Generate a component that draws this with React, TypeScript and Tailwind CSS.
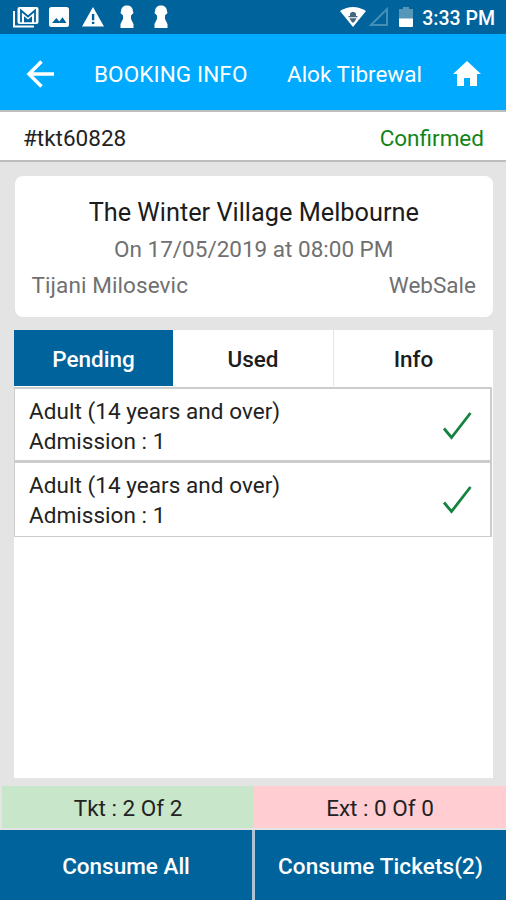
import React from "react";

function TicketRow({ className }: { className: string }) {
  return (
    <div className={`flex items-center justify-between border-[#cccccc] pl-[14px] pr-[17px] ${className}`}>
      <div className="text-[22.5px] leading-[30px] tracking-[0.05px] text-[#222]">
        <div>Adult (14 years and over)</div>
        <div>Admission : 1</div>
      </div>
      <svg className="h-[30px] w-[32px]" viewBox="0 0 32 30" fill="none" stroke="#14833f" strokeWidth="2.8">
        <path d="M3 17.5 10.5 26.5 29.5 2" />
      </svg>
    </div>
  );
}

function Keyhole() {
  return (
    <svg className="h-6 w-4" viewBox="0 0 16 24" fill="white">
      <path d="M8 0.5C4.6 0.5 2.2 2.6 2.2 5.5L1.5 8L4 10.500V14L1.500 19V23H14.500V19L12 14V10.500L14.500 8L13.800 5.500C13.800 2.600 11.400 0.500 8 0.500Z" />
    </svg>
  );
}

export default function App() {
  return (
    <div className="flex h-[900px] w-[506px] flex-col overflow-hidden bg-[#e4e4e4] font-[Roboto,sans-serif] text-[22.5px]">
      <header className="flex h-[34px] shrink-0 items-center bg-[#00639b] pl-[12px] pr-[11px] text-white">
        <svg className="h-6 w-7" viewBox="0 0 28 24" fill="none" stroke="white">
          <path d="M2 6v15.5h20" strokeWidth="2" />
          <rect x="5.500" y="2" width="21" height="17" rx="2" fill="white" stroke="none" />
          <path d="M9 17.200V5.500l7 6 7-6v11.700" strokeWidth="1.800" stroke="#00639b" />
          <path d="M12 17.200v-6l4 3.300 4-3.300v6Z" fill="#00639b" stroke="none" />
        </svg>
        <svg className="ml-[9px] h-5 w-5" viewBox="0 0 20 20">
          <rect width="20" height="20" rx="2.5" fill="white" />
          <path d="m3 16 4.3-5 3 3.4 3.2-4.2L17.5 16Z" fill="#00639b" />
        </svg>
        <svg className="ml-[13px] h-5 w-[22px]" viewBox="0 0 22 20">
          <path d="m11 0 11 19.5H0Z" fill="white" />
          <path d="M9.9 7h2.4v6.2H9.9Zm0 7.7h2.4V17H9.9Z" fill="#00639b" />
        </svg>
        <div className="ml-[15px] flex gap-[18px]"><Keyhole /><Keyhole /></div>
        <svg className="ml-auto h-[21px] w-[26px]" viewBox="0 0 26 21">
          <path d="M0 4Q13-4 26 4L13 20Z" fill="white" />
          <path d="M10 9V6.5Q13 3 16 6.5V9h1.5v1.3h-9V9ZM9.5 11.3h7L15 14l-2 2-2-2Z" fill="#45677e" />
        </svg>
        <svg className="ml-[3px] h-5 w-5" viewBox="0 0 20 20" fill="none" stroke="#438fb6" strokeWidth="2">
          <path d="M18 2v16H2Z" />
        </svg>
        <svg className="ml-[10px] h-[20px] w-[14px]" viewBox="0 0 14 20">
          <path d="M4 0h6v2h4v10H0V2h4Z" fill="#5596b9" />
          <path d="M0 11.5h14V19q0 1-1 1H1q-1 0-1-1Z" fill="white" />
        </svg>
        <span className="ml-[9px] pt-[3px] text-[19.5px] font-medium leading-none">3:33 PM</span>
      </header>

      <nav className="flex h-[76px] shrink-0 items-center bg-[#00aaff] pl-[26px] pr-[25px] pt-[4px] text-white">
        <svg className="h-7 w-[29px]" viewBox="0 0 29 28" fill="none" stroke="white" strokeWidth="3.5">
          <path d="M28 14H3M15.5 1.5 3 14l12.5 12.5" />
        </svg>
        <span className="ml-[39px] pt-[2px] tracking-[0.1px]">BOOKING INFO</span>
        <span className="ml-auto mr-[31px] pt-[2px]">Alok Tibrewal</span>
        <svg className="mb-[2px] h-[25px] w-7" viewBox="0 0 28 25" fill="white">
          <path d="M14 0 0 13h4v12h7v-8h6v8h7V13h4Z" />
        </svg>
      </nav>

      <section className="flex h-[52px] shrink-0 items-center justify-between border-y-2 border-[#bdbdbd] bg-white pl-[23px] pr-[22px] pt-[6px]">
        <span className="text-[#222]">#tkt60828</span>
        <span className="text-[#128416]">Confirmed</span>
      </section>

      <section className="ml-[14.5px] mr-[13px] mt-[14px] h-[141px] shrink-0 rounded-lg bg-white px-[17px] pt-[18px] text-[#707070]">
        <h1 className="pt-px text-center text-[25.3px] leading-[35px] text-[#1c1c1c]">The Winter Village Melbourne</h1>
        <p className="text-center leading-[38px]">On 17/05/2019 at 08:00 PM</p>
        <div className="flex justify-between leading-[34px]"><span className="tracking-[0.1px]">Tijani Milosevic</span><span>WebSale</span></div>
      </section>

      <main className="ml-[14px] mr-[13px] mt-[13px] flex h-[448px] shrink-0 flex-col bg-white">
        <div className="flex h-[56px] shrink-0 text-center font-medium leading-[58px] text-[#1c1c1c]">
          <div className="w-[159px] bg-[#00639b] text-white">Pending</div>
          <div className="w-[161px] border-r border-[#e4e4e4]">Used</div>
          <div className="flex-1">Info</div>
        </div>
        <TicketRow className="mt-px mr-px h-[75px] border-2 border-l pt-[2px]" />
        <TicketRow className="mr-px h-[75px] border border-r-2" />
      </main>

      <div className="mt-2 flex h-[42px] shrink-0 pl-[2px] text-center leading-[44px] text-[#222]">
        <div className="w-[252px] bg-[#c8e6c9]">Tkt : 2 Of 2</div>
        <div className="flex-1 bg-[#ffcdd2]">Ext : 0 Of 0</div>
      </div>
      <div className="mt-[2px] flex h-[70px] gap-[3px] bg-[#adc4d4] text-center font-medium leading-[72px] text-white">
        <button className="w-[252px] bg-[#00639b]">Consume All</button>
        <button className="flex-1 bg-[#00639b] tracking-[0.1px]">Consume Tickets(2)</button>
      </div>
    </div>
  );
}
